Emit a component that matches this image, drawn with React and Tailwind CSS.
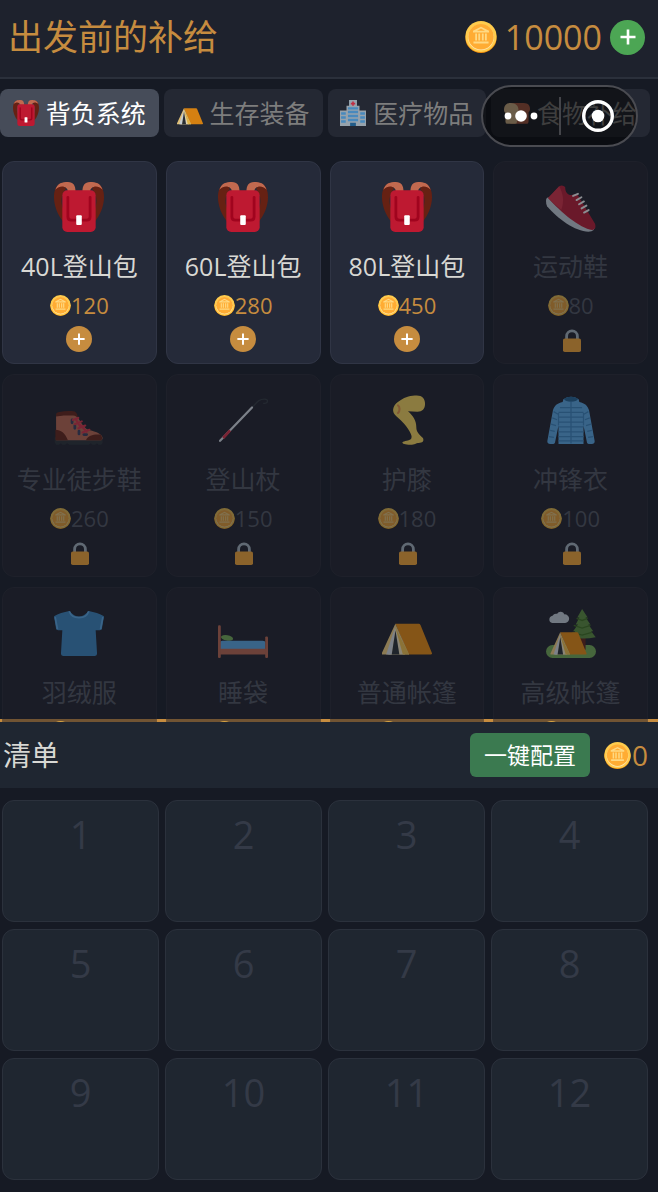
import React, { useState } from 'react';

const Svg = ({ className, children }) => (
  <svg viewBox="0 0 36 36" className={className} aria-hidden="true">
    {children}
  </svg>
);

const Coin = ({ className }) => (
  <Svg className={className}>
    <ellipse cx="18" cy="19" rx="17.5" ry="17" fill="#F4900C" />
    <circle cx="18" cy="17.5" r="17.5" fill="#FFCC4D" />
    <circle cx="18" cy="18.5" r="14.5" fill="#FFE8B6" />
    <circle cx="18" cy="17.7" r="14.3" fill="#FFAC33" />
    <path
      d="M18 6.500L27 11v2H9v-2zM11.500 14h2v8h-2zM15 14h2v8h-2zM19 14h2v8h-2zM22.500 14h2v8h-2zM9.500 23h17v2.200h-17z"
      fill="#FFD983"
    />
    <path d="M18 8.500l4.500 2.400h-9z" fill="#FFAC33" />
  </Svg>
);

const Backpack = ({ className }) => (
  <Svg className={className}>
    <path d="M6 .6C1 2 0 7 0 11c0 6 2.500 12.500 6.500 17.500V19C4.800 15 5 9 8.500 5zM30 .6c5 1.400 6 6.400 6 10.400 0 6-2.500 12.500-6.500 17.500V19c1.700-4 1.500-10-2-14z" fill="#662113" />
    <path d="M1 5.500C2.500.8 6 0 10 0c4 0 5.500 2.500 5.500 7H10C10 3.500 5 1.500 1 5.500zM35 5.500C33.500.8 30 0 26 0c-4 0-5.500 2.500-5.500 7H26c0-3.500 5-5.500 9-1.500z" fill="#C1694F" />
    <rect x="6" y="6" width="24" height="30" rx="3.500" fill="#BE1931" />
    <path d="M10 11v14q0 2.500 2.500 2.500h11Q26 27.500 26 25V11" fill="none" stroke="#A0041E" strokeWidth="2" strokeLinecap="round" />
    <rect x="16" y="24" width="4" height="7" rx=".7" fill="#fff" />
  </Svg>
);

const TentShape = () => (
  <>
    <path d="M9.600 11.400H26.500q.8 0 1.200.8L36 32.500q.2 1-1 1H19z" fill="#F4900C" />
    <path d="M9.600 11.400L19.500 33.500H0q-.3-.6 0-1.200z" fill="#FFD983" />
    <path d="M9.600 14.500L16.500 33.500h-12z" fill="#FFF1C9" />
    <path d="M9.600 13L3 33.500h4z" fill="#E1E8ED" />
    <path d="M9.800 14.500L19.500 33.500H15z" fill="#FFCC4D" />
    <path d="M9.700 16L12.500 33.500H7z" fill="#292F33" />
  </>
);

const Tent = ({ className }) => (
  <Svg className={className}>
    <TentShape />
  </Svg>
);

const Camping = ({ className }) => (
  <Svg className={className}>
    <rect x="0" y="26.700" width="36" height="9.300" rx="4.700" fill="#77B255" />
    <rect x="24.500" y="20" width="4" height="10" fill="#662113" />
    <path d="M26 .8l4 6h-1.500l3.500 5h-1.500l3.500 5h-1.500l3.300 4.300q-9 1.700-18 0L21 16.800h-1.500L23 11.800h-1.600L24 6.800h-1.500z" fill="#5C913B" />
    <path d="M22 7.500l4 1.500 4-1.500M20 12.500l6 2 6-2M19 17.500l7 2 7-2" fill="none" stroke="#3E721D" strokeWidth="1" />
    <path d="M4.500 10.800a2.700 2.700 0 0 1 .2-5.300A3 3 0 0 1 8 4.200a2.900 2.900 0 0 1 5.300.4 3 3 0 0 1 .5 6.200z" fill="#CCD6DD" />
    <g transform="translate(3.300 9.300) scale(.72)">
      <TentShape />
    </g>
  </Svg>
);

const Sneaker = ({ className }) => (
  <Svg className={className}>
    <path d="M0 13.500q0-2.500 2.500-2.500L35 31.500q.8 4-4.500 4.300C21 35.800 8 26 .8 17.500Q0 16 0 13.500z" fill="#CCD6DD" />
    <path d="M1.500 11.500L9.500 3q2.500-1.200 4.300.6c0 3.500 1.500 5.800 4.500 5.800l4-1L35.300 30q1.200 4-2 4.600C24 33 11 22 1.500 11.500z" fill="#BE1931" />
    <path d="M1.500 11.500L9.500 3C12 8 13.500 13 11 20Q6 16 1.500 11.500z" fill="#DD2E44" />
    <path d="M19.500 10l3.500-1.500M22 13l3.500-2M23.800 16l3.500-2M25.600 19l3.500-2M27.400 22l3.300-1.800" stroke="#fff" strokeWidth="1.400" strokeLinecap="round" />
  </Svg>
);

const Boot = ({ className }) => (
  <Svg className={className}>
    <path d="M.5 30.500h34.500v4l-1 1.300h-2l-1-1-1.500 1h-2l-1-1-1.500 1H11l-1.500-1-1.500 1H6l-1-1-1.500 1h-2L.5 34z" fill="#292F33" />
    <path d="M1.500 15L15 13.500l2.500 3c1.500 2.500 3.500 6.500 7 8.500 4 1 8 2 10 4.500.8 1.500.5 2.500-.5 3H1.500z" fill="#C1694F" />
    <path d="M1.500 15.500v-1.500c0-1.200 1-1.500 2.500-1.800 4-.9 7.500-.9 11-.4 1.500 1 2 2.500 2 4.500-1.500-1.500-2.500-1.500-4.500-1.500-4 0-7 0-11 .7zM1 25c4 0 7 2.500 9 7.500H1zM23 32.500c1.500-3.500 6-4.500 10.500-4 1.300 1.500 1.500 3 .7 4z" fill="#662113" />
    <path d="M13 18v2M15 22v2M18 26v2M21.500 28.500h2" stroke="#3B3D5C" strokeWidth="2" strokeLinecap="round" />
    <path d="M13.500 18l4-1.500M15 21l5-2M17.500 24l5-2M20.500 27l5-2M16 18l3 5M19 21.500l4.500 5" stroke="#DD2E44" strokeWidth="1.500" strokeLinecap="round" />
  </Svg>
);

const Pole = ({ className }) => (
  <Svg className={className}>
    <path d="M24.500 9C28 5.500 29 3 33.500 3c3 0 3 3-1 3" fill="none" stroke="#31373D" strokeWidth="1" />
    <path d="M1.500 33L24.500 9" stroke="#E1E8ED" strokeWidth="1.600" strokeLinecap="round" />
    <path d="M3.700 31l5-5.500" stroke="#DD2E44" strokeWidth="2" />
  </Svg>
);

const Leg = ({ className }) => (
  <Svg className={className}>
    <path d="M13 4C17 1 21 .3 25 .3c4 0 6 2.500 6 6C31 10 29 12 25.500 12l-6.800-.3c4 3.500 6 7 6 11.300 0 4 2 5 4.800 8 1 2.500-.5 3.500-3 3.500-2 0-3 1.300-6 1.300-4 0-6-.8-5.800-1.800 1-1 5-1 6.300-2.500.8-1.500 0-3-1-5C17 21 13 18 9.300 14.300 6.500 11 8.500 6.500 13 4z" fill="#FFDC5D" />
    <path d="M11.500 7.500c1.500 1 1.500 4 0 5.500" fill="none" stroke="#EF9645" strokeWidth="1.500" strokeLinecap="round" />
  </Svg>
);

const Jacket = ({ className }) => (
  <Svg className={className}>
    <path d="M12.500 3q5.500-3.500 11 0l.5 2c4 1 6 2.500 7 6l4 22c.2 1.500-.5 2.200-2 2.200h-2.300q-1 0-1.200-1L27 22v13.300H9V22L6.500 34.200q-.2 1-1.200 1H3c-1.500 0-2.200-.7-2-2.200l4-22c1-3.500 3-5 7-6z" fill="#5DADEC" />
    <ellipse cx="18" cy="3" rx="4.700" ry="1.800" fill="#226699" />
    <path d="M18 5v30M10 9h16M9 12.500h18M9 16h18M9 19.500h18M9 23h18M9 26.500h18M9 30h18M9 33h18M5.500 12l3.500 2M4.500 16.500l3.500 1.300M3.700 21l3.500 1M3 25.500l3.300.7M2.200 30l3.500.5M30.500 12L27 14M31.500 16.500L28 17.800M32.300 21l-3.500 1M33 25.500l-3.300.7M33.800 30l-3.500.5M9 13v9M27 13v9" stroke="#3B88C3" strokeWidth=".9" />
  </Svg>
);

const Shirt = ({ className }) => (
  <Svg className={className}>
    <path d="M11 2.200q7 8 14 0c4 .8 8 2 11 3.800L34.500 15q-.3 1-1.500 1h-3l1 17q0 1.500-1.500 1.500h-23Q5 34.500 5 33l1-17H3q-1.200 0-1.500-1L0 6c3-1.800 7-3 11-3.800z" fill="#3B88C3" />
    <path d="M11 2.300C13 8.500 23 8.500 25 2.300M.8 6.500L2.500 15.300M35.200 6.500l-1.700 8.800" fill="none" stroke="#5DADEC" strokeWidth="1.200" />
  </Svg>
);

const Bed = ({ className }) => (
  <Svg className={className}>
    <ellipse cx="6.500" cy="21.500" rx="4.400" ry="2" transform="rotate(10 6.500 21.500)" fill="#77B255" />
    <path d="M1.500 29.500v-4.400q0-1.600 1.600-1.600h29q2 0 2 1.600v4.400z" fill="#5DADEC" />
    <path d="M1.500 29.300h33v4.200h-33z" fill="#C1694F" />
    <rect x="0" y="12.500" width="2" height="23.500" rx=".8" fill="#C1694F" />
    <rect x="34" y="20.500" width="2" height="15.500" rx=".8" fill="#C1694F" />
  </Svg>
);

const Hospital = ({ className }) => (
  <Svg className={className}>
    <path d="M0 14.500h9V8h3.500V0h11v8H27v6.500h9V36H0z" fill="#AAB8C2" />
    <path d="M18 2v6M15 5h6" stroke="#DD2E44" strokeWidth="2.200" />
    <path d="M11 10h14v3H11zM11 15h14v3.500H11zM11 20.500h14V24H11zM11 26h14v3.500H11zM1.500 17H8v3.500H1.500zM1.500 22.500H8V26H1.500zM1.500 28H8v3.500H1.500zM28 17h6.500v3.500H28zM28 22.500h6.500V26H28zM28 28h6.500v3.500H28z" fill="#4F9BD6" />
    <path d="M14 31.500h8V36h-8z" fill="#226699" />
  </Svg>
);

const Bread = ({ className }) => (
  <Svg className={className}>
    <path d="M9 4h18c7 0 9 4 9 8 0 3-1 4-2 5v13q0 3-3 3H9z" fill="#C1694F" />
    <path d="M9 4c7 0 11 4 11 9 0 3-1 4-2 5v12q0 3-3 3H5q-3 0-3-3V18c-1-1-2-2-2-5 0-5 3-9 9-9z" fill="#F3D2A2" />
  </Svg>
);

const Lock = () => (
  <svg viewBox="0 0 18 23" className="ml-0.5 h-[23px] w-[18px]" role="img" aria-label="未解锁">
    <path d="M3.600 12V7.200a5.400 5.400 0 0 1 10.800 0V12" fill="none" stroke="#AAB8C2" strokeWidth="2.800" />
    <rect x="0" y="9.500" width="18" height="13.500" rx="1.800" fill="#FFAC33" />
  </svg>
);

const Plus = ({ className }) => (
  <svg viewBox="0 0 16 16" className={className} aria-hidden="true">
    <path d="M8 .5v15M.5 8h15" stroke="#fff" strokeWidth="2.600" />
  </svg>
);

const tabs = [
  { name: '背负系统', Icon: Backpack },
  { name: '生存装备', Icon: Tent },
  { name: '医疗物品', Icon: Hospital },
  { name: '食物补给', Icon: Bread },
];

const items = [
  { name: '40L登山包', price: 120, Icon: Backpack, unlocked: true },
  { name: '60L登山包', price: 280, Icon: Backpack, unlocked: true },
  { name: '80L登山包', price: 450, Icon: Backpack, unlocked: true },
  { name: '运动鞋', price: 80, Icon: Sneaker },
  { name: '专业徒步鞋', price: 260, Icon: Boot },
  { name: '登山杖', price: 150, Icon: Pole },
  { name: '护膝', price: 180, Icon: Leg },
  { name: '冲锋衣', price: 100, Icon: Jacket },
  { name: '羽绒服', price: 320, Icon: Shirt },
  { name: '睡袋', price: 200, Icon: Bed },
  { name: '普通帐篷', price: 300, Icon: Tent },
  { name: '高级帐篷', price: 600, Icon: Camping },
];

const ItemCard = ({ item }) => {
  const { name, price, Icon, unlocked } = item;
  return (
    <div
      className={`flex flex-col items-center rounded-xl border pt-5 pb-[11px] ${
        unlocked ? 'border-[#303545] bg-[#252a39]' : 'border-[#262730] bg-[#1e1e28] opacity-50'
      }`}
    >
      <Icon className="size-[50px]" />
      <h3 className={`mt-4 text-[25px] leading-9 whitespace-nowrap ${unlocked ? 'text-[#d8d8d4]' : 'text-[#50545e]'}`}>
        {name}
      </h3>
      <div className={`mt-2 flex items-center text-[22px] leading-[26px] ${unlocked ? 'text-[#c68c3f]' : 'text-[#50545e]'}`}>
        <Coin className={`size-[21px] ${unlocked ? '' : 'opacity-90'}`} />
        {price}
      </div>
      <div className="mt-2 flex h-[26px] items-end">
        {unlocked ? (
          <button
            type="button"
            aria-label={`添加 ${name}`}
            className="flex size-[26px] items-center justify-center rounded-full bg-[#c68c3f]"
          >
            <Plus className="size-3" />
          </button>
        ) : (
          <Lock />
        )}
      </div>
    </div>
  );
};

const App = () => {
  const [active, setActive] = useState(0);

  return (
    <div className="relative flex h-screen flex-col overflow-hidden bg-[#161a24] font-['Open_Sans','Noto_Sans_CJK_SC',sans-serif]">
      <header className="flex shrink-0 items-center justify-between border-b-2 border-[#2b303b] bg-[#1e222d] pt-[15px] pr-[13px] pb-[18px] pl-2">
        <h1 className="text-[35px] leading-[44px] text-[#c68c3f]">出发前的补给</h1>
        <div className="flex items-center">
          <Coin className="size-8" />
          <span className="ml-2 text-[34px] leading-[44px] text-[#c68c3f]">10000</span>
          <button
            type="button"
            aria-label="充值"
            className="ml-2 flex size-[35px] items-center justify-center rounded-full bg-[#4ca654]"
          >
            <Plus className="size-4" />
          </button>
        </div>
      </header>

      <nav className="flex shrink-0 gap-[5px] pt-[10px] pr-2">
        {tabs.map(({ name, Icon }, index) => (
          <button
            key={name}
            type="button"
            onClick={() => setActive(index)}
            className={`flex h-12 flex-1 items-center justify-center gap-[7px] rounded-lg text-[25px] leading-9 whitespace-nowrap ${
              index === active ? 'bg-[#464c59] text-white' : 'bg-[#242833] text-[#7d7d7d]'
            }`}
          >
            <Icon className={`size-[26px] ${index === active ? '' : 'opacity-85'}`} />
            {name}
          </button>
        ))}
      </nav>

      {/* Mini program capsule */}
      <div className="absolute top-[85px] right-5 z-20 flex h-[62px] w-[157px] items-center rounded-full border-2 border-[#4a4b51] bg-black/50">
        <button type="button" aria-label="更多" className="flex h-full flex-1 items-center justify-center">
          <svg viewBox="0 0 34 12" className="h-3 w-[34px]" aria-hidden="true">
            <circle cx="4" cy="6" r="3.400" fill="#fff" />
            <circle cx="17" cy="6" r="5.800" fill="#fff" />
            <circle cx="30" cy="6" r="3.400" fill="#fff" />
          </svg>
        </button>
        <span className="h-[38px] w-0.5 bg-[#44454a]" />
        <button type="button" aria-label="关闭" className="flex h-full flex-1 items-center justify-center">
          <svg viewBox="0 0 32 32" className="size-8" aria-hidden="true">
            <circle cx="16" cy="16" r="14.300" fill="none" stroke="#fff" strokeWidth="3.400" />
            <circle cx="16" cy="16" r="6.300" fill="#fff" />
          </svg>
        </button>
      </div>

      {/* Catalogue runs over the panel's top rule */}
      <main className="relative z-10 mt-6 -mb-[3px] min-h-0 flex-1 overflow-y-auto [scrollbar-width:none]">
        <div className="grid grid-cols-4 gap-x-[9px] gap-y-[10px] pr-[10px] pl-0.5">
          {items.map((item) => (
            <ItemCard key={item.name} item={item} />
          ))}
        </div>
      </main>

      <section className="shrink-0 border-t-[3px] border-[#c68c3f]">
        <div className="flex items-center bg-[#1f2631] py-[11px] pr-[10px] pl-[3px]">
          <h2 className="text-[28px] leading-9 text-[#d8d8d4]">清单</h2>
          <button
            type="button"
            className="ml-auto rounded-md bg-[#3b7a50] px-[14px] py-1 text-[23px] leading-9 text-white"
          >
            一键配置
          </button>
          <div className="ml-[14px] flex items-center gap-px text-[28px] leading-9 text-[#c68c3f]">
            <Coin className="size-[27px]" />0
          </div>
        </div>
        <div className="grid grid-cols-4 gap-x-1.5 gap-y-[7px] py-3 pr-[10px] pl-0.5">
          {Array.from({ length: 12 }, (_, i) => (
            <div
              key={i}
              className="h-[122px] rounded-xl border border-[#2b313c] bg-[#1f2630] pt-[13px] text-center text-[38px] leading-10 text-[#343a47]"
            >
              {i + 1}
            </div>
          ))}
        </div>
      </section>
    </div>
  );
};

export default App;
